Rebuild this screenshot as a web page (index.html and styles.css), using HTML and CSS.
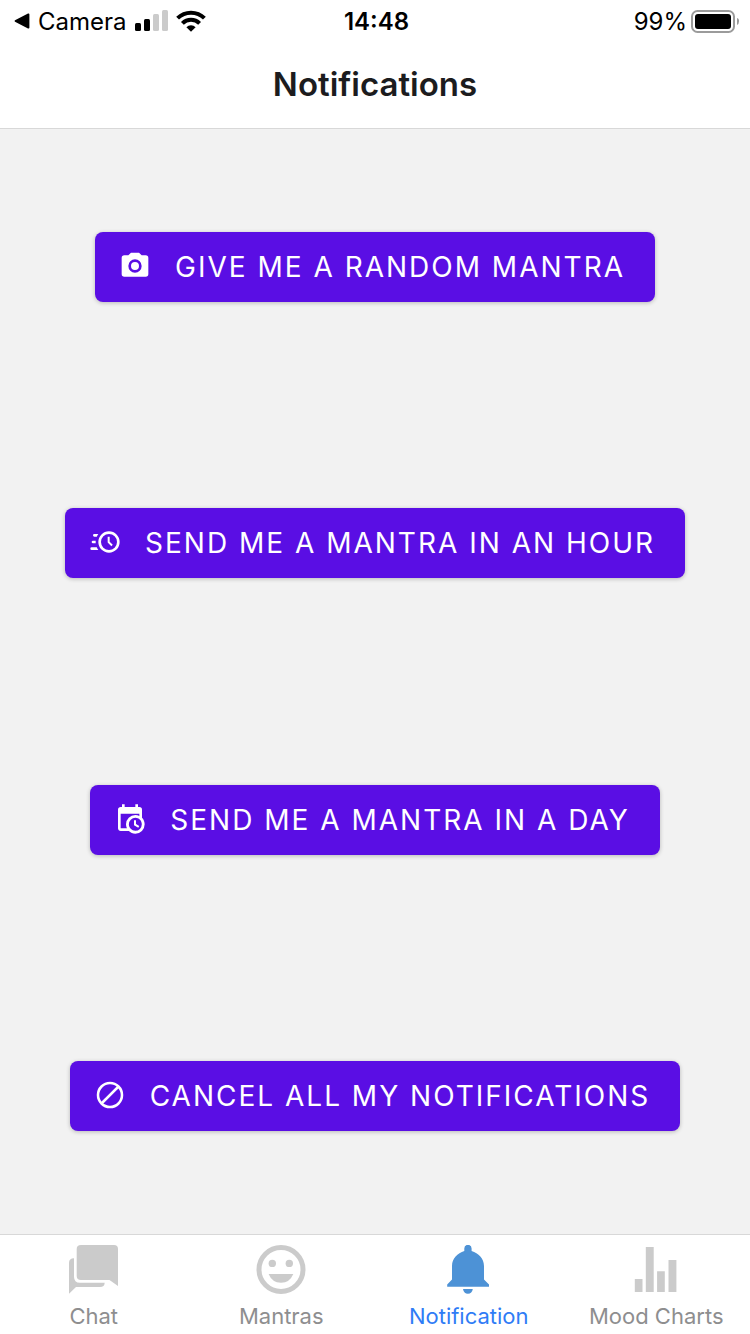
FILE: index.html
```html
<!DOCTYPE html>
<html lang="en">
<head>
<meta charset="utf-8">
<meta name="viewport" content="width=device-width, initial-scale=1">
<title>Notifications</title>
<link rel="stylesheet" href="styles.css">
</head>
<body>
<div class="status">
  <div class="status-left">
    <svg class="back" width="16" height="16" viewBox="0 0 16 16" aria-hidden="true"><path d="M1 7.2 14 .6q1.400-.5 1.400 1v12.800q0 1.500-1.400 1L1 8.800q-1-.8 0-1.600z"/></svg>
    <span class="source">Camera</span>
    <svg class="signal" width="33" height="23" viewBox="0 0 33 23" aria-hidden="true">
      <rect x="0" y="13" width="6" height="8" rx="1.500"/><rect x="9" y="9" width="6" height="12" rx="1.500"/>
      <g fill="#cbcbcb"><rect x="18" y="4" width="6" height="17" rx="1.500"/><rect x="27" y="0" width="6" height="21" rx="1.500"/></g>
    </svg>
    <svg class="wifi" width="30" height="22" viewBox="0 0 30 22" aria-hidden="true">
      <g fill="none" stroke="#000" stroke-width="4"><path d="M1.600 8.200a19 19 0 0 1 26.800 0"/><path d="M6.400 13.300a12.200 12.200 0 0 1 17.200 0"/></g>
      <path d="M15 21.800l-4.600-4.600a6.500 6.500 0 0 1 9.200 0z"/>
    </svg>
  </div>
  <div class="clock">14:48</div>
  <div class="status-right">
    <span>99%</span>
    <svg width="48" height="23" viewBox="0 0 48 23" aria-hidden="true">
      <rect x="1" y="1" width="42" height="21" rx="5.500" fill="none" stroke="#9b9b9b" stroke-width="2"/>
      <rect x="4" y="4" width="36" height="15" rx="3"/>
      <path d="M46 8q2.500 1 2 3.500 0 2.500-2 3.500z" fill="#9b9b9b"/>
    </svg>
  </div>
</div>
<header class="header"><h1>Notifications</h1></header>
<main class="content">
  <button class="action" type="button">
    <svg class="icon" viewBox="0 0 24 24" aria-hidden="true"><path d="M4,4H7L9,2H15L17,4H20A2,2 0 0,1 22,6V18A2,2 0 0,1 20,20H4A2,2 0 0,1 2,18V6A2,2 0 0,1 4,4M12,7A5,5 0 0,0 7,12A5,5 0 0,0 12,17A5,5 0 0,0 17,12A5,5 0 0,0 12,7M12,9A3,3 0 0,1 15,12A3,3 0 0,1 12,15A3,3 0 0,1 9,12A3,3 0 0,1 12,9Z"/></svg>
    <span>GIVE ME A RANDOM MANTRA</span>
  </button>
  <button class="action" type="button">
    <svg class="icon" viewBox="0 0 24 24" aria-hidden="true"><path d="M15,4A8,8 0 0,1 23,12A8,8 0 0,1 15,20A8,8 0 0,1 7,12A8,8 0 0,1 15,4M15,6A6,6 0 0,0 9,12A6,6 0 0,0 15,18A6,6 0 0,0 21,12A6,6 0 0,0 15,6M14,8H15.5V11.780L17.830,14.110L16.770,15.170L14,12.400V8M2,18A1,1 0 0,1 1,17A1,1 0 0,1 2,16H5.830C6.140,16.710 6.540,17.380 7,18H2M3,13A1,1 0 0,1 2,12A1,1 0 0,1 3,11H5.050L5,12L5.050,13H3M4,8A1,1 0 0,1 3,7A1,1 0 0,1 4,6H7C6.540,6.620 6.140,7.290 5.830,8H4Z"/></svg>
    <span>SEND ME A MANTRA IN AN HOUR</span>
  </button>
  <button class="action" type="button">
    <svg class="icon" viewBox="0 0 24 24" aria-hidden="true"><path d="M15,13H16.500V15.820L18.940,17.230L18.190,18.530L15,16.690V13M19,8H5V19H9.670C9.240,18.090 9,17.070 9,16A7,7 0 0,1 16,9C17.070,9 18.090,9.240 19,9.670V8M5,21C3.890,21 3,20.100 3,19V5C3,3.890 3.890,3 5,3H6V1H8V3H16V1H18V3H19A2,2 0 0,1 21,5V11.100C22.240,12.360 23,14.090 23,16A7,7 0 0,1 16,23C14.090,23 12.360,22.240 11.100,21H5M16,11.150A4.850,4.850 0 0,0 11.150,16C11.150,18.680 13.320,20.850 16,20.850A4.850,4.850 0 0,0 20.850,16C20.850,13.320 18.680,11.150 16,11.150Z"/></svg>
    <span>SEND ME A MANTRA IN A DAY</span>
  </button>
  <button class="action" type="button">
    <svg class="icon" viewBox="0 0 24 24" aria-hidden="true"><g fill="none" stroke="#fff" stroke-width="1.900"><circle cx="12" cy="12" r="9"/><path d="M5.800 18.200 18.200 5.800"/></g></svg>
    <span>CANCEL ALL MY NOTIFICATIONS</span>
  </button>
</main>
<nav class="tabs">
  <a class="tab" href="#chat">
    <svg class="tab-icon" viewBox="0 0 50 50" aria-hidden="true"><path d="M12 0H45q4 0 4 4V41L40.500 35H12q-4.300 0-4.300-4V4q0-4 4.300-4z"/><path d="M5 13.300q-5 0-5 4.500v31L7 42H31q4.500 0 4.700-4.300H11q-6 0-6-6z"/></svg>
    <span>Chat</span>
  </a>
  <a class="tab" href="#mantras">
    <svg class="tab-icon" viewBox="0 0 50 50" aria-hidden="true"><circle cx="25" cy="24.500" r="22" fill="none" stroke="#cbcbcb" stroke-width="5"/><circle cx="16.300" cy="18.400" r="3.700"/><circle cx="33.300" cy="18.400" r="3.700"/><path d="M12.600 29H37.300q-3.500 8.700-12.300 8.700T12.600 29z"/></svg>
    <span>Mantras</span>
  </a>
  <a class="tab active" href="#notification" aria-current="page">
    <svg class="tab-icon" viewBox="0 0 50 50" aria-hidden="true"><path d="M20.300 6V3.500a3.650 3.650 0 0 1 7.300 0V6C34.500 8 40 13.500 40 21V34.500L45 39.500V41.800H3.200V39.500L8 34.500V21C8 13.500 13.500 8 20.300 6zM19 44h9.800q-.8 4.800-4.900 4.800T19 44z"/></svg>
    <span>Notification</span>
  </a>
  <a class="tab" href="#mood">
    <svg class="tab-icon" viewBox="0 0 50 50" aria-hidden="true"><path d="M3.800 34h7.700v13H3.800zM14.800 2h7.900v45h-7.900zM26.100 26.300h7.700V47h-7.700zM37.500 15h7.900v32h-7.900z"/></svg>
    <span>Mood Charts</span>
  </a>
</nav>
</body>
</html>
```
FILE: styles.css
```css
* {
  box-sizing: border-box;
}

body {
  margin: 0;
  min-height: 100vh;
  display: flex;
  flex-direction: column;
  background: #f2f2f2;
  font-family: Inter, "Liberation Sans", sans-serif;
}

.status {
  display: grid;
  grid-template-columns: 1fr auto 1fr;
  align-items: center;
  height: 40px;
  padding: 0 11px 0 14px;
  background: #fff;
  color: #000;
  font-size: 24px;
  line-height: 40px;
}

.status-left,
.status-right {
  display: flex;
  align-items: center;
  height: 40px;
}

.status-left {
  gap: 8px;
}

.status-right {
  justify-content: flex-end;
  gap: 4px;
}

.status span,
.clock {
  padding-top: 2px;
}

.clock {
  font-weight: 600;
}

.header {
  height: 89px;
  background: #fff;
  border-bottom: 1px solid #d8d8d8;
}

.header h1 {
  margin: 0;
  color: #1c1c1e;
  font-size: 33px;
  font-weight: 600;
  line-height: 88px;
  text-align: center;
}

.content {
  flex: 1;
  display: flex;
  flex-direction: column;
  align-items: center;
  justify-content: space-around;
}

.action {
  display: flex;
  align-items: center;
  gap: 24px;
  height: 70px;
  padding: 0 30px 0 24px;
  border: 0;
  border-radius: 8px;
  background: #5a0ee4;
  box-shadow: 0 1px 4px rgba(0, 0, 0, 0.24);
  color: #fff;
  font-family: inherit;
  font-size: 28px;
  font-weight: 400;
  letter-spacing: 2px;
  white-space: nowrap;
}

.icon {
  width: 32px;
  height: 32px;
  margin-bottom: 2px;
  fill: #fff;
}

.tabs {
  display: grid;
  grid-template-columns: repeat(4, 1fr);
  height: 100px;
  padding-top: 10px;
  border-top: 1px solid #d8d8d8;
  background: #fff;
}

.tab {
  display: flex;
  flex-direction: column;
  align-items: center;
  gap: 7px;
  color: #8e8e8f;
  font-size: 22px;
  line-height: 28px;
  text-decoration: none;
}

.tab-icon {
  width: 50px;
  height: 50px;
  fill: #cbcbcb;
}

.active {
  color: #2f7cf6;
}

.active .tab-icon {
  fill: #4d92d6;
}
```
